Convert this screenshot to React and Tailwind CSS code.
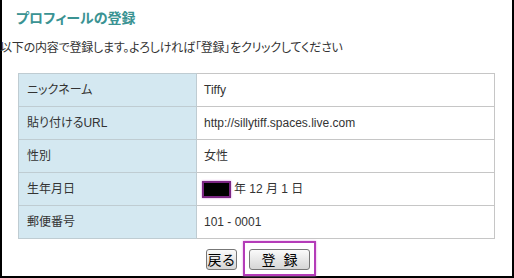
const ROWS = [
  { label: "ニックネーム", value: "Tiffy" },
  { label: "貼り付けるURL", value: "http://sillytiff.spaces.live.com" },
  { label: "性別", value: "女性" },
  { label: "生年月日", value: "birth" },
  { label: "郵便番号", value: "101 - 0001" },
];

const FONT = "font-['Liberation_Sans','Noto_Sans_CJK_JP',sans-serif]";

export default function App() {
  return (
    <div className={`w-[514px] h-[278px] bg-white border-x-2 border-b-2 border-black text-[#333] ${FONT} flex flex-col`}>
      {/* 見出し */}
      <h1 className="pl-[14px] pt-[8px] h-[36px] text-[14px] font-bold text-[#3a9393] [font-feature-settings:'palt']">
        プロフィールの登録
      </h1>
      <p className="-ml-[2px] h-[37px] text-[12px] leading-[14px] pt-[5px] tracking-[-0.2px] [font-feature-settings:'palt']">
        以下の内容で登録します。よろしければ「登録」をクリックしてください
      </p>

      {/* 登録内容 */}
      <table className="ml-[16px] w-[477px] border-collapse text-[12px]">
        <tbody>
          {ROWS.map(r => (
            <tr key={r.label} className="h-[33px]">
              <td className="w-[178px] bg-[#d4e8f1] border border-[#bfccd2] pl-[8px] [font-feature-settings:'palt']">{r.label}</td>
              <td className="border border-[#c6c6c6] pl-[7px]">
                {r.value === "birth" ? (
                  <span className="flex items-center gap-[3px] -ml-[2px]">
                    <span className="inline-block w-[29px] h-[17px] bg-black border-2 border-[#7c2684] shadow-[0_0_2px_#d080d8]" />
                    <span>年 12 月 1 日</span>
                  </span>
                ) : r.value}
              </td>
            </tr>
          ))}
        </tbody>
      </table>

      {/* ボタン */}
      <div className="flex items-start pl-[204px] pt-[2px]">
        <button className="mt-[8px] w-[31px] h-[21px] text-[14px] leading-none rounded-[3px] border border-[#777] bg-gradient-to-b from-[#fafafa] to-[#d6d6d6] text-black">
          戻る
        </button>
        <div className="ml-[6px] border-2 border-[#b43cb8] shadow-[0_0_2px_#e0a0e4] px-[4px] pt-[6px] pb-[4px]">
          <button className="block w-[61px] h-[21px] text-[14px] leading-none rounded-[3px] border border-[#777] bg-gradient-to-b from-[#fafafa] to-[#d6d6d6] text-black tracking-[8px] pl-[8px]">
            登録
          </button>
        </div>
      </div>
    </div>
  );
}
